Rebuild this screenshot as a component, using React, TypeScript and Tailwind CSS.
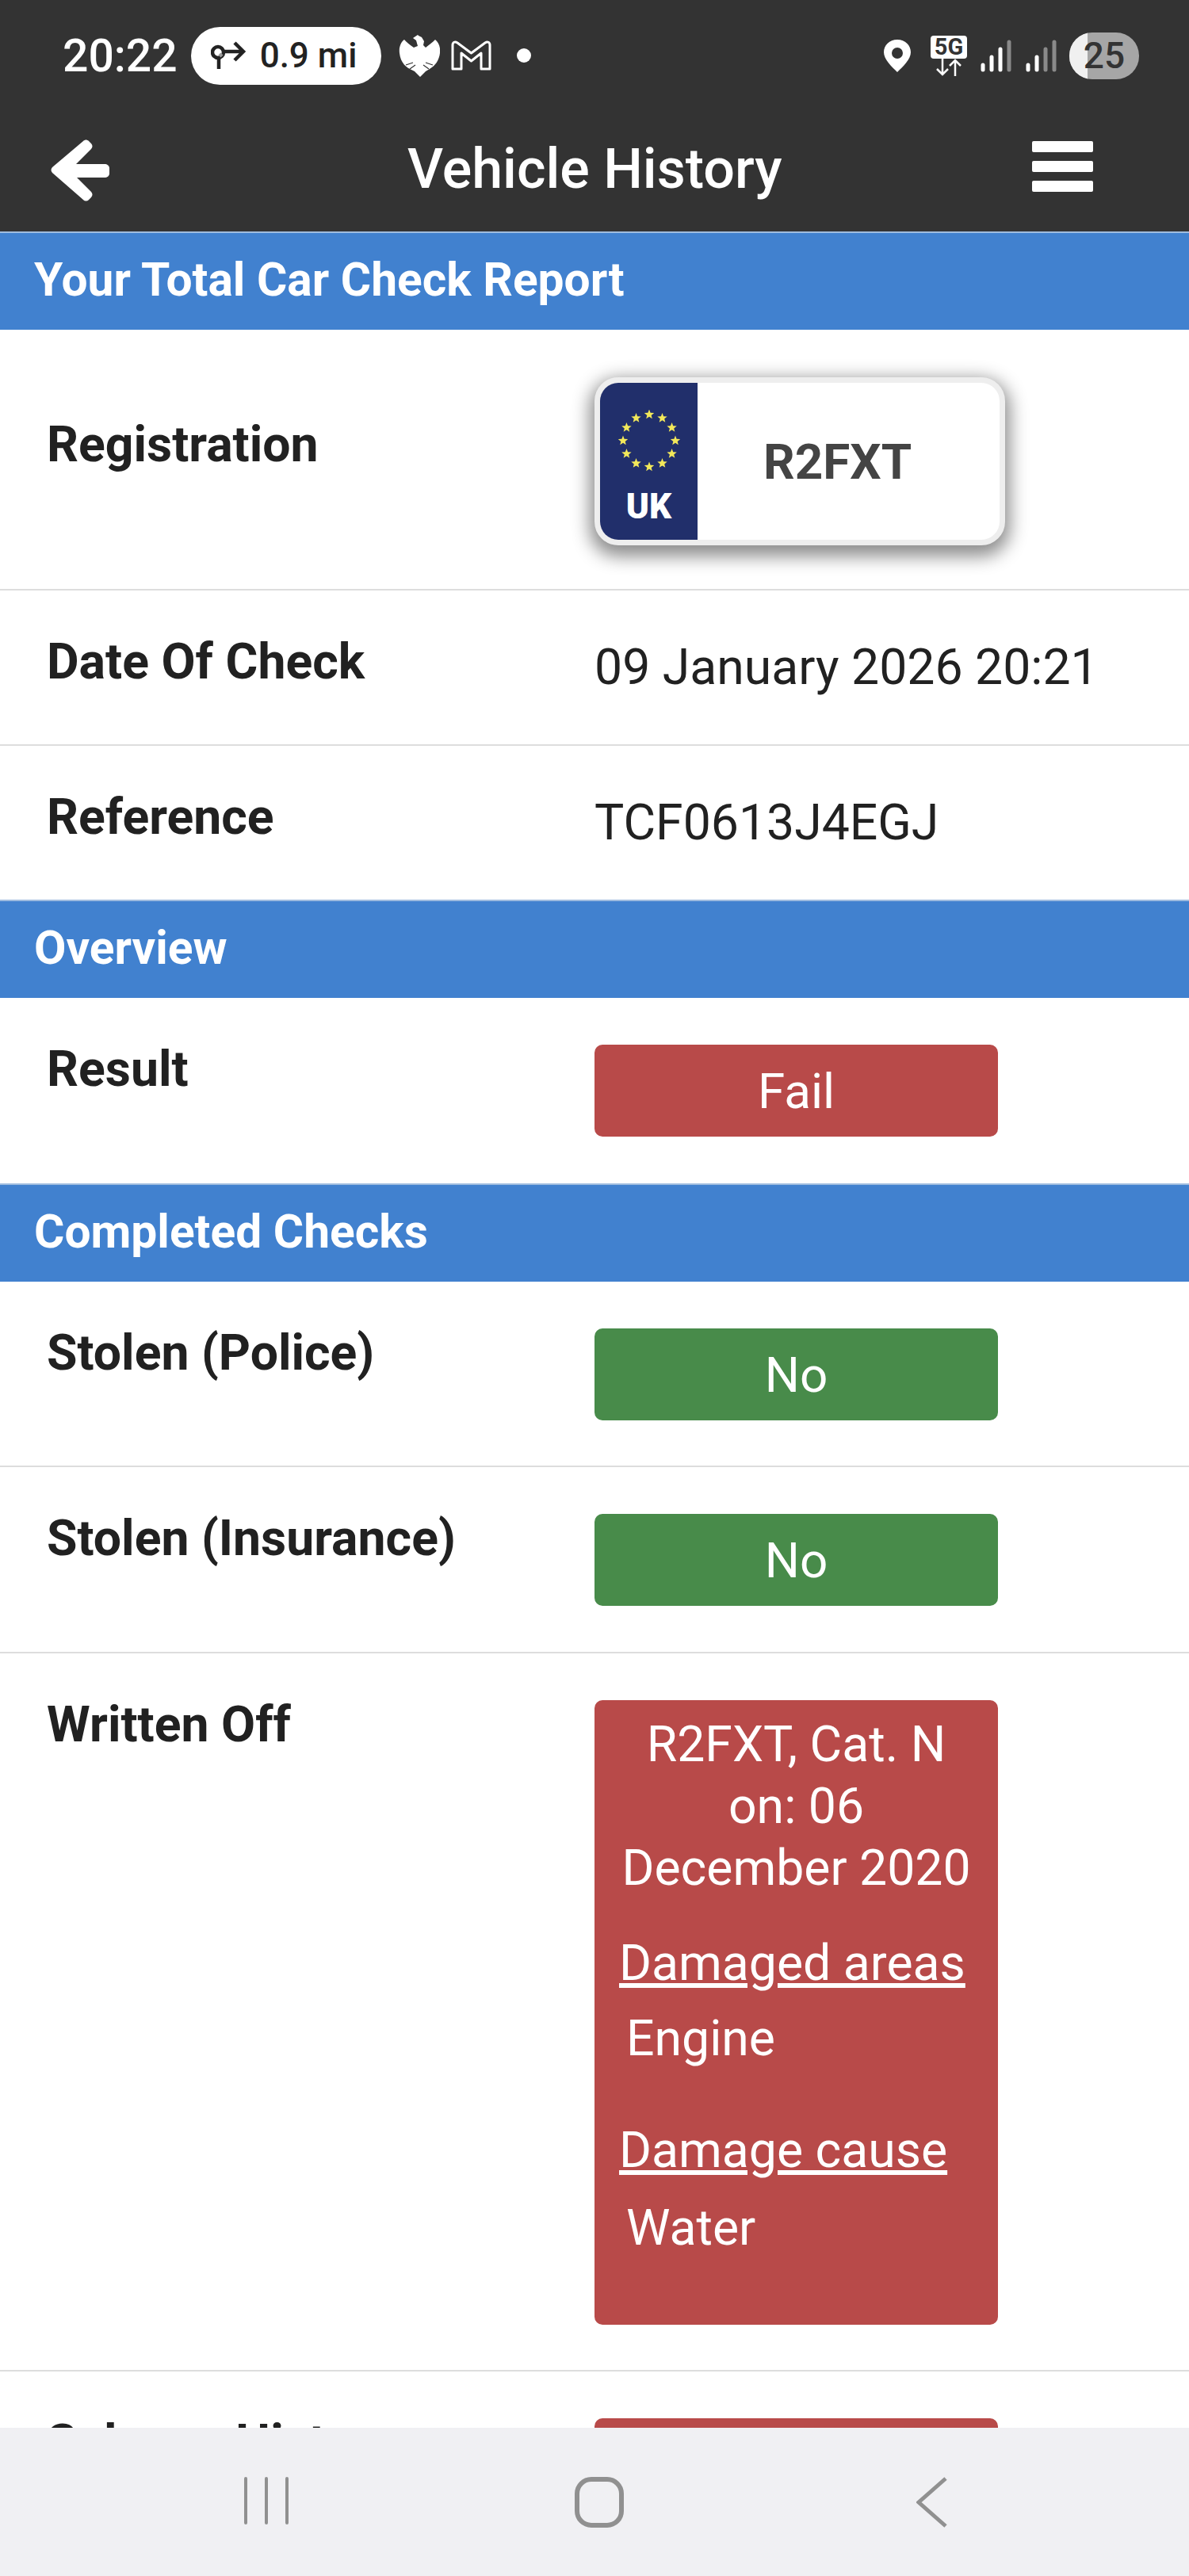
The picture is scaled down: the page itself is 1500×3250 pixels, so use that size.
import type { ReactNode } from 'react';

function SectionHeader({ children }: { children: ReactNode }) {
  return (
    <div className="flex h-[124px] items-center border-t-2 border-[#9fbcdf] bg-[#4181cf] pb-[3px] pl-[43px] text-[58.7px] font-bold text-white">
      {children}
    </div>
  );
}

function Row({ label, children, pb = 'pb-[59px]', last }: { label: string; children: ReactNode; pb?: string; last?: boolean }) {
  return (
    <div className={`flex pt-[59px] ${pb} ${last ? '' : 'border-b-2 border-[#dddddd]'}`}>
      <div className="w-[750px] pl-[59px] text-[62.5px] leading-[62px] font-bold text-[#212121]">{label}</div>
      <div className="w-[509px]">{children}</div>
    </div>
  );
}

function Badge({ color, children }: { color: string; children?: ReactNode }) {
  return (
    <div className={`flex h-[116px] items-center justify-center rounded-[10px] text-[62px] text-white ${color}`}>
      {children}
    </div>
  );
}

function Stars() {
  const stars = Array.from({ length: 12 }, (_, i) => {
    const a = (i * Math.PI) / 6;
    const cx = 33 + 33 * Math.sin(a) + 6;
    const cy = 33 - 33 * Math.cos(a) + 6;
    const pts = Array.from({ length: 10 }, (_, j) => {
      const r = j % 2 === 0 ? 6.5 : 2.8;
      const b = (j * Math.PI) / 5;
      return `${(cx + r * Math.sin(b)).toFixed(1)},${(cy - r * Math.cos(b)).toFixed(1)}`;
    }).join(' ');
    return <polygon key={i} points={pts} fill="#f2e85a" />;
  });
  return (
    <svg width="78" height="78" viewBox="0 0 78 78">
      {stars}
    </svg>
  );
}

function Plate() {
  return (
    <div className="flex h-[212px] w-[518px] overflow-hidden rounded-[30px] border-[7px] border-[#eeeeee] bg-white shadow-[0_8px_22px_6px_rgba(0,0,0,0.45)]">
      <div className="flex w-[123px] flex-col items-center bg-[#212f6b] pt-[34px]">
        <Stars />
        <div className="mt-[22px] text-[44px] leading-[44px] font-black text-white">UK</div>
      </div>
      <div className="flex flex-1 items-center justify-center pr-[28px] text-[62px] font-bold text-[#444444]">R2FXT</div>
    </div>
  );
}

function Signal({ className, grayFrom }: { className: string; grayFrom: number }) {
  const bars = ['M3 32V38', 'M14 22V38', 'M25 12V38', 'M36 3V38'];
  return (
    <svg className={className} width="39" height="41" viewBox="0 0 39 41" fill="none" strokeWidth="5" strokeLinecap="round">
      {bars.map((d, i) => (
        <path key={d} d={d} stroke={i >= grayFrom ? '#8a8a8a' : 'white'} />
      ))}
    </svg>
  );
}

function StatusBar() {
  return (
    <div className="flex h-[140px] items-center pl-[79px] pr-[63px] text-white">
      <span className="text-[57px] leading-none font-medium">20:22</span>
      <div className="ml-[17px] flex h-[73px] w-[240px] items-center gap-[16px] rounded-full bg-white pl-[25px] text-[#222222]">
        <svg width="46" height="38" viewBox="0 0 46 38" fill="none" stroke="#222" strokeWidth="4.5">
          <circle cx="9" cy="15" r="7" />
          <path d="M10 22V36M16 14H41M30 3l11 11-11 11" />
          <path d="M11 20l3-3" stroke="#999" />
        </svg>
        <span className="text-[44px] leading-none font-medium">0.9 mi</span>
      </div>
      <svg className="ml-[22px]" width="52" height="54" viewBox="0 0 52 54" fill="white">
        <path d="M24 1l-6 4 4 3 2 7-5 2C14 14 10 10 7 7 3 10 0 16 1 24c1 10 6 16 13 20l6 3 7 7 7-7 5-3c7-4 12-11 13-20 1-8-2-14-6-17-3 3-8 7-12 10l-3-3 1-5-3-5-4-2z" />
        <path d="M9 39l9-3M43 39l-9-3M14 44l7-5M38 44l-7-5" stroke="#333" strokeWidth="1.2" fill="none" />
      </svg>
      <svg className="ml-[14px]" width="51" height="38" viewBox="0 0 51 38" fill="none" stroke="white" strokeWidth="3" strokeLinejoin="round">
        <path d="M2 36V6c0-4 3-5 6-3l17.500 13L43 3c3-2 6-1 6 3v30H38V16L25.500 26 13 16v20z" />
      </svg>
      <div className="ml-[32px] h-[18px] w-[18px] rounded-full bg-white" />
      <div className="ml-auto flex items-center">
        <svg width="34" height="41" viewBox="0 0 34 41">
          <path fillRule="evenodd" fill="white" d="M17 0C7 0 0 7 0 16c0 9 10 18 17 25 7-7 17-16 17-25C34 7 27 0 17 0zm0 10a7 7 0 110 14 7 7 0 010-14z" />
        </svg>
        <div className="ml-[25px] flex w-[46px] flex-col items-center">
          <div className="flex h-[29px] w-[46px] items-center justify-center rounded-[4px] bg-white text-[29px] leading-none font-bold text-[#333333]">
            5G
          </div>
          <svg width="40" height="22" viewBox="0 0 40 22" fill="none" stroke="white" strokeWidth="2.5">
            <path d="M12 0V20M5 13l7 7 7-7M28 22V2M21 9l7-7 7 7" />
          </svg>
        </div>
        <Signal className="ml-[17px]" grayFrom={3} />
        <Signal className="ml-[18px]" grayFrom={2} />
        <div className="relative ml-[16px] flex h-[59px] w-[88px] items-center justify-center overflow-hidden rounded-[29px] bg-[#a6a6a6]">
          <div className="absolute top-0 bottom-0 left-0 w-[23px] bg-[#f0f0f0]" />
          <span className="relative text-[46px] leading-none font-medium text-[#333333]">25</span>
        </div>
      </div>
    </div>
  );
}

function TitleBar() {
  return (
    <div className="flex h-[152px] items-center pb-[6px] text-white">
      <div className="flex w-[514px] shrink-0 pl-[64px] pt-[4px]">
        <svg width="74" height="78" viewBox="0 0 74 78" fill="white">
          <path d="M41 2c2-2 5-2 7 0l3 3c2 2 2 5 0 7L32 31h36c3 0 6 2 6 5v7c0 3-3 5-6 5H33l18 18c2 2 2 5 0 7l-3 3c-2 2-5 2-7 0L2 42c-2-2-2-5 0-7z" />
        </svg>
      </div>
      <div className="flex-1 whitespace-nowrap text-center text-[70px] leading-none font-medium">Vehicle History</div>
      <div className="flex w-[514px] shrink-0 flex-col items-end gap-[11px] pr-[122px] pb-[6px]">
        <div className="h-[14px] w-[77px] rounded-[2px] bg-white" />
        <div className="h-[14px] w-[77px] rounded-[2px] bg-white" />
        <div className="h-[14px] w-[77px] rounded-[2px] bg-white" />
      </div>
    </div>
  );
}

function NavBar() {
  return (
    <div className="flex h-[187px] items-start justify-center bg-[#f0f0f3] pl-[12px] pt-[62px]">
      <div className="flex w-[420px] justify-center">
        <svg width="58" height="60" viewBox="0 0 58 60" stroke="#909090" strokeWidth="4" strokeLinecap="round">
          <path d="M3 2V58M29 2V58M55 2V58" />
        </svg>
      </div>
      <div className="flex w-[420px] justify-center">
        <svg width="62" height="64" viewBox="0 0 62 64" fill="none" stroke="#909090" strokeWidth="6">
          <rect x="3" y="3" width="56" height="58" rx="18" />
        </svg>
      </div>
      <div className="flex w-[420px] justify-center">
        <svg width="40" height="64" viewBox="0 0 40 64" fill="none" stroke="#909090" strokeWidth="5">
          <path d="M37 2L3 32L37 62" />
        </svg>
      </div>
    </div>
  );
}

export default function App() {
  return (
    <div className="flex h-[3250px] w-[1500px] flex-col overflow-hidden bg-white font-[Roboto,sans-serif]">
      <div className="bg-[#333333]">
        <StatusBar />
        <TitleBar />
      </div>
      <div className="min-h-0 flex-1 overflow-hidden">
        <SectionHeader>Your Total Car Check Report</SectionHeader>
        <div className="flex h-[329px] items-start border-b-2 border-[#dddddd] pt-[60px]">
          <div className="w-[750px] pl-[59px] pt-[54px] text-[62.5px] leading-[62px] font-bold text-[#212121]">Registration</div>
          <Plate />
        </div>
        <Row label="Date Of Check">
          <div className="whitespace-nowrap text-[62.5px] leading-[76px] text-[#212121]">09 January 2026 20:21</div>
        </Row>
        <Row label="Reference" last>
          <div className="text-[62.5px] leading-[76px] text-[#212121]">TCF0613J4EGJ</div>
        </Row>
        <SectionHeader>Overview</SectionHeader>
        <Row label="Result" last>
          <Badge color="bg-[#b84a49]">Fail</Badge>
        </Row>
        <SectionHeader>Completed Checks</SectionHeader>
        <Row label="Stolen (Police)" pb="pb-[57px]">
          <Badge color="bg-[#488b4a]">No</Badge>
        </Row>
        <Row label="Stolen (Insurance)" pb="pb-[58px]">
          <Badge color="bg-[#488b4a]">No</Badge>
        </Row>
        <Row label="Written Off" pb="pb-[57px]">
          <div className="rounded-[10px] bg-[#b84a49] pt-[17px] pb-[83px] text-[62.5px] leading-[78px] text-white">
            <div className="text-center">
              R2FXT, Cat. N
              <br />
              on: 06
              <br />
              December 2020
            </div>
            <div className="mt-[42px] pl-[31px] underline">Damaged areas</div>
            <div className="mt-[17px] pl-[40px]">Engine</div>
            <div className="mt-[63px] pl-[31px] underline">Damage cause</div>
            <div className="mt-[20px] pl-[40px]">Water</div>
          </div>
        </Row>
        <Row label="Salvage History">
          <Badge color="bg-[#b84a49]" />
        </Row>
      </div>
      <NavBar />
    </div>
  );
}
